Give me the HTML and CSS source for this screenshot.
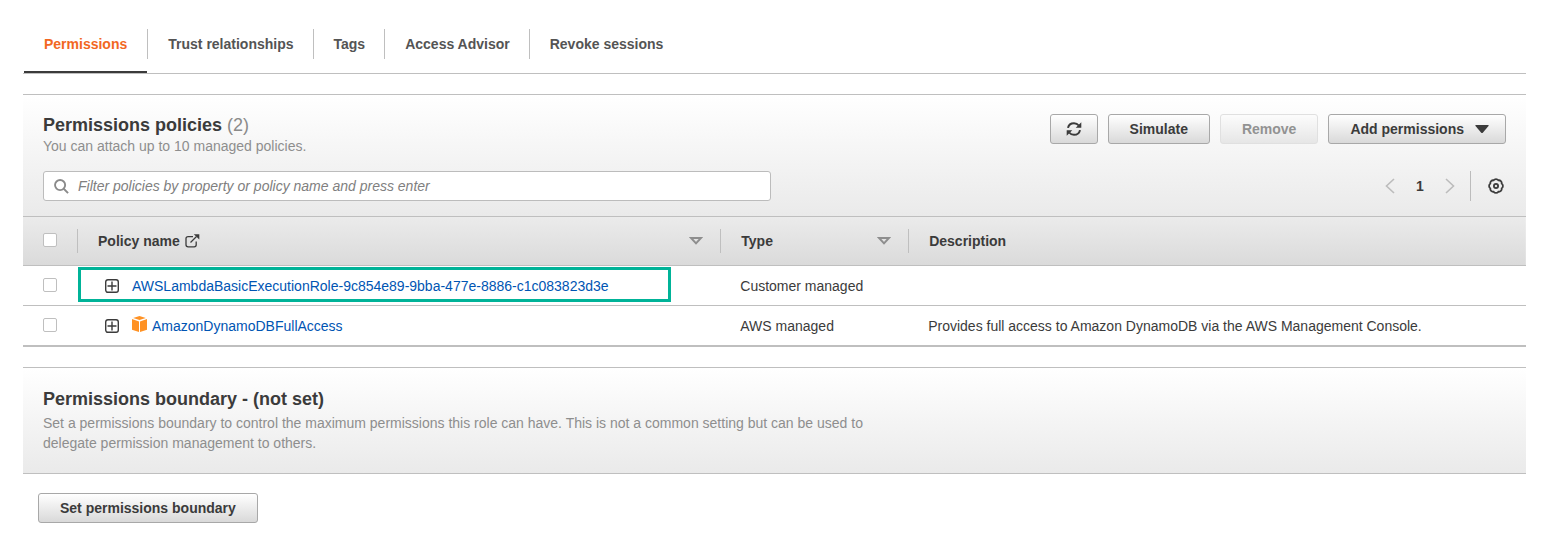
FILE: index.html
```html
<!DOCTYPE html>
<html lang="en">
<head>
<meta charset="utf-8">
<title>Permissions</title>
<link rel="stylesheet" href="styles.css">
</head>
<body>
<main class="page">
  <nav class="tabs" aria-label="Role sections">
    <a class="tab tab-active" href="#permissions"><span>Permissions</span></a>
    <a class="tab" href="#trust"><span>Trust relationships</span></a>
    <a class="tab" href="#tags"><span>Tags</span></a>
    <a class="tab" href="#advisor"><span>Access Advisor</span></a>
    <a class="tab" href="#sessions"><span>Revoke sessions</span></a>
  </nav>

  <section class="policies">
    <header class="panel-head">
      <div class="head-row">
        <div>
          <h2 class="title">Permissions policies <span class="count">(2)</span></h2>
          <p class="hint">You can attach up to 10 managed policies.</p>
        </div>
        <div class="actions">
          <button class="btn btn-icon" type="button" aria-label="Refresh">
            <svg width="16" height="16" viewBox="0 0 16 16" fill="none" stroke="#3b3b3b" stroke-width="2">
              <path d="M2 6.9C2.6 4 5 2.2 8 2.2c2 0 3.7.9 4.8 2.3M14 9.1c-.6 2.9-3 4.7-6 4.7-2 0-3.7-.9-4.8-2.3"/>
              <path fill="#3b3b3b" stroke="none" d="M15.300 1.200v5.600H9.700zM.7 14.800V9.200h5.600z"/>
            </svg>
          </button>
          <button class="btn" type="button">Simulate</button>
          <button class="btn" type="button" disabled>Remove</button>
          <button class="btn btn-menu" type="button">Add permissions
            <svg width="14" height="8" viewBox="0 0 14 8"><path d="M1 0h12q1.300 0 .5 1L8 7.500q-1 1-2 0L.5 1Q-.3 0 1 0z" fill="#3b3b3b"/></svg>
          </button>
        </div>
      </div>
      <div class="filter-row">
        <label class="search">
          <svg width="15" height="15" viewBox="0 0 16 16" fill="none" stroke="#8a8a8a" stroke-width="2"><circle cx="6.500" cy="6.500" r="5.400"/><path d="M10.400 10.400l4.600 4.600"/></svg>
          <input type="text" aria-label="Filter policies" placeholder="Filter policies by property or policy name and press enter">
        </label>
        <div class="pager">
          <button class="plain" type="button" aria-label="Previous page"><svg width="10" height="16" viewBox="0 0 10 16" fill="none" stroke="#bcbcbc" stroke-width="1.600"><path d="M9 1L1.500 8 9 15"/></svg></button>
          <span class="page-no">1</span>
          <button class="plain" type="button" aria-label="Next page"><svg width="10" height="16" viewBox="0 0 10 16" fill="none" stroke="#bcbcbc" stroke-width="1.600"><path d="M1 1l7.500 7L1 15"/></svg></button>
          <span class="rule"></span>
          <button class="plain" type="button" aria-label="Settings">
            <svg width="16" height="16" viewBox="-8 -8 16 16" fill="none" stroke="#3b3b3b" stroke-width="1.800"><path d="M5.700-2.360A2.900 2.900 0 0 1 5.700 2.360 2.900 2.900 0 0 1 2.360 5.700 2.900 2.900 0 0 1-2.360 5.700 2.900 2.900 0 0 1-5.700 2.360 2.900 2.900 0 0 1-5.700-2.360 2.900 2.900 0 0 1-2.360-5.700 2.900 2.900 0 0 1 2.360-5.700 2.900 2.900 0 0 1 5.700-2.360z"/><circle r="2.100"/></svg>
          </button>
        </div>
      </div>
    </header>

    <table class="grid">
      <colgroup><col class="c-check"><col class="c-name"><col class="c-type"><col></colgroup>
      <thead>
        <tr>
          <th class="check"><input type="checkbox" aria-label="Select all policies"></th>
          <th><div class="col-head"><span>Policy name</span>
            <svg width="15" height="14" viewBox="0 0 15 14" fill="none" stroke="#3b3b3b" stroke-width="1.300"><path d="M8 2.600H3.200Q1 2.600 1 4.600v6.200q0 2 2.200 2h6q2 0 2-2V7.500"/><path d="M5.500 8.500l6-6"/><path d="M8.800.2H14.300V5.600z" fill="#3b3b3b" stroke="none"/></svg>
            <button class="plain sort" type="button" aria-label="Sort by policy name"><svg width="14" height="8" viewBox="0 0 14 8" fill="none" stroke="#8e8e8e" stroke-width="2"><path d="M2 1h10L7 6.400z"/></svg></button></div></th>
          <th><div class="col-head"><span>Type</span>
            <button class="plain sort" type="button" aria-label="Sort by type"><svg width="14" height="8" viewBox="0 0 14 8" fill="none" stroke="#8e8e8e" stroke-width="2"><path d="M2 1h10L7 6.400z"/></svg></button></div></th>
          <th><div class="col-head"><span>Description</span></div></th>
        </tr>
      </thead>
      <tbody>
        <tr>
          <td class="check"><input type="checkbox" aria-label="Select AWSLambdaBasicExecutionRole"></td>
          <td class="name"><div class="policy marked">
            <button class="plain expand" type="button" aria-label="Expand policy"><svg width="14" height="14" viewBox="0 0 14 14" fill="none" stroke="#3b3b3b" stroke-width="1.400"><rect x=".7" y=".7" width="12.600" height="12.600" rx="2.200"/><path d="M7 2.500v9M2.500 7h9"/></svg></button>
            <a href="#lambda">AWSLambdaBasicExecutionRole-9c854e89-9bba-477e-8886-c1c083823d3e</a></div></td>
          <td>Customer managed</td>
          <td></td>
        </tr>
        <tr>
          <td class="check"><input type="checkbox" aria-label="Select AmazonDynamoDBFullAccess"></td>
          <td class="name"><div class="policy">
            <button class="plain expand" type="button" aria-label="Expand policy"><svg width="14" height="14" viewBox="0 0 14 14" fill="none" stroke="#3b3b3b" stroke-width="1.400"><rect x=".7" y=".7" width="12.600" height="12.600" rx="2.200"/><path d="M7 2.500v9M2.500 7h9"/></svg></button>
            <svg class="cube" width="16" height="16" viewBox="0 0 16 16" fill="#ff9224"><path d="M7.500 0l6.300 1.900-6.300 2.200-6.300-2.200zM0 3.100l7 2.300V16l-7-2.300zM15 3.100L8 5.400V16l7-2.300z"/></svg>
            <a href="#dynamodb">AmazonDynamoDBFullAccess</a></div></td>
          <td>AWS managed</td>
          <td>Provides full access to Amazon DynamoDB via the AWS Management Console.</td>
        </tr>
      </tbody>
    </table>
  </section>

  <section>
    <header class="panel-head boundary">
      <h2 class="title">Permissions boundary - (not set)</h2>
      <p class="hint">Set a permissions boundary to control the maximum permissions this role can have. This is not a common setting but can be used to delegate permission management to others.</p>
    </header>
    <div class="boundary-actions"><button class="btn" type="button">Set permissions boundary</button></div>
  </section>
</main>
</body>
</html>
```

FILE: styles.css
```css
* { box-sizing: border-box; }
body {
  margin: 0;
  background: #fff;
  color: #3b3b3b;
  font: 14px/20px "Liberation Sans", Arial, sans-serif;
}
h2, p { margin: 0; }
a { color: #0055b3; text-decoration: none; }
svg { display: block; flex: none; }
.page { padding: 0 28px 0 23px; }

.tabs {
  display: flex;
  padding-left: 1px;
  border-bottom: 1px solid #bfbfbf;
  margin-bottom: 20px;
}
.tab {
  padding: 29px 0 12px;
  border-bottom: 2px solid transparent;
  color: #545454;
  font-weight: 700;
}
.tab span { display: block; padding: 0 20px; line-height: 30px; }
.tab + .tab span { padding-right: 19px; border-left: 1px solid #bfbfbf; }
.tab-active { color: #f26722; border-bottom-color: #3b3b3b; }

.policies { border-bottom: 1px solid #bfbfbf; margin-bottom: 20px; }
.panel-head {
  padding: 19px 20px 15px;
  border-top: 1px solid #bfbfbf;
  border-bottom: 1px solid #bfbfbf;
  background: linear-gradient(#fff, #eaeaea);
}
.head-row, .filter-row { display: flex; justify-content: space-between; }
.filter-row { margin-top: 15px; }
.title { font-size: 18px; line-height: 22px; }
.count { color: #8a8a8a; font-weight: 400; }
.hint { color: #8e8e8e; }
.actions { display: flex; gap: 10px; height: 30px; }
.btn {
  display: flex;
  align-items: center;
  height: 30px;
  padding: 0 21px;
  border: 1px solid #a8a8a8;
  border-radius: 3px;
  background: linear-gradient(#fff, #d9d9d9);
  color: #3b3b3b;
  font: inherit;
  font-weight: 700;
}
.btn:disabled {
  border-color: #e0e0e0;
  background: linear-gradient(#fcfcfc, #e6e6e6);
  color: #929292;
}
.btn-icon { padding: 0 15px; }
.btn-menu { gap: 11px; padding-right: 16px; }

.search {
  display: flex;
  align-items: center;
  gap: 9px;
  flex: 0 1 728px;
  height: 30px;
  padding: 0 10px;
  border: 1px solid #bcbcbc;
  border-radius: 3px;
  background: #fff;
}
.search input {
  flex: 1;
  padding: 0;
  border: 0;
  outline: 0;
  background: none;
  font: inherit;
}
.search input::placeholder { color: #808080; font-style: italic; opacity: 1; }
.pager { display: flex; align-items: center; }
.plain { padding: 0; border: 0; background: none; }
.page-no { width: 50px; text-align: center; font-weight: 700; }
.rule { width: 1px; height: 30px; margin: 0 17px 0 15px; background: #bcbcbc; }
.pager .plain:last-child { margin-right: 2px; }

.grid { width: 100%; table-layout: fixed; border-collapse: separate; border-spacing: 0; }
.c-check { width: 54px; }
.c-name { width: 42.8%; }
.c-type { width: 12.5%; }
.grid thead { background: linear-gradient(#ebebeb, #dadada); }
.grid th { height: 49px; padding: 0; border-bottom: 1px solid #bfbfbf; text-align: left; }
.grid td { height: 40px; padding: 1px 20px 0; border-bottom: 1px solid #bfbfbf; }
.grid .check { padding: 0 0 2px 20px; }
.check input {
  display: block;
  appearance: none;
  width: 14px;
  height: 14px;
  margin: 0;
  border: 1px solid #bfbfbf;
  border-radius: 2px;
  background: #fff;
}
.col-head {
  display: flex;
  align-items: center;
  gap: 5px;
  height: 24px;
  padding: 0 17px 0 20px;
  border-left: 1px solid #bfbfbf;
}
.sort { margin-left: auto; }
.grid .name { padding: 1px 49px 3px 1px; }
.policy {
  display: flex;
  align-items: center;
  height: 35px;
  padding: 3px 0 0 24px;
  border: 3px solid transparent;
}
.marked { border-color: #00b398; }
.expand { margin-right: 13px; }
.cube { margin: 0 4px 4px 0; }

.boundary { padding-bottom: 20px; }
.boundary .title { padding-bottom: 2px; line-height: 24px; }
.boundary .hint { max-width: 840px; }
.boundary-actions { padding: 19px 15px; }
```
